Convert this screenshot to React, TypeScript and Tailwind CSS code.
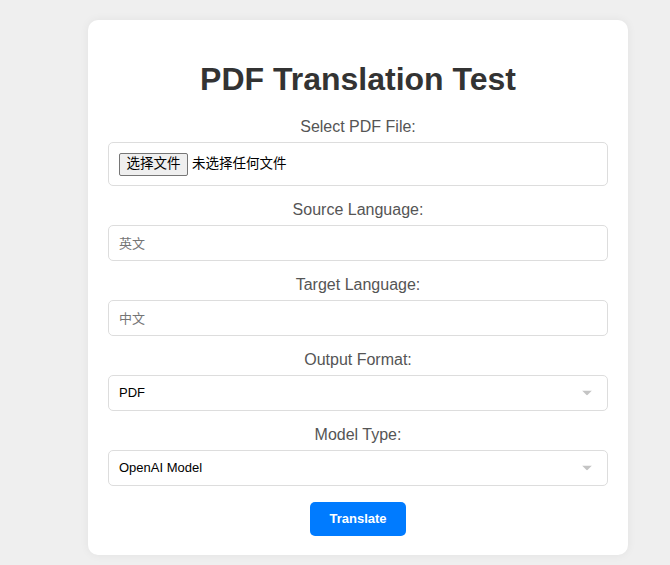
import React from "react";

const labelCls = "block text-center text-[16px] leading-[18px] text-[#555555] mb-[6px]";
const fieldCls =
  "w-full h-[36px] px-[10px] border border-[#dddddd] rounded-[5px] text-[13px] bg-white outline-none";

const Chevron = () => (
  <svg
    className="absolute right-[16px] top-1/2 -translate-y-1/2"
    width="10"
    height="5"
    viewBox="0 0 10 5"
  >
    <path d="M0 0 L10 0 L5 5 Z" fill="#c4c4c4" />
  </svg>
);

const SelectField = ({ value }: { value: string }) => (
  <div className="relative mb-[15px]">
    <div className={fieldCls + " flex items-center text-black"}>{value}</div>
    <Chevron />
  </div>
);

const App = () => {
  return (
    <div
      className="min-h-[565px] bg-[#efefef] pt-[20px] pl-[88px]"
      style={{ fontFamily: '"Liberation Sans", Arial, "Noto Sans CJK SC", sans-serif' }}
    >
      <div className="w-[540px] bg-white rounded-[10px] shadow-[0_0_10px_rgba(0,0,0,0.06)] px-[20px] pt-[20px] pb-[19px]">
        <h1 className="text-center text-[32px] leading-[37px] font-bold text-[#333333] mt-[21px] mb-[20px]">
          PDF Translation Test
        </h1>

        <label className={labelCls}>Select PDF File:</label>
        <div className="w-full h-[44px] px-[10px] border border-[#dddddd] rounded-[5px] mb-[15px] flex items-center gap-[4px] text-[13.5px] text-black">
          <span className="h-[23px] w-[69px] justify-center flex items-center border border-[#767676] rounded-[2px] bg-[#efefef]">
            选择文件
          </span>
          <span>未选择任何文件</span>
        </div>

        <label className={labelCls}>Source Language:</label>
        <input className={fieldCls + " mb-[15px] placeholder:text-[#757575]"} placeholder="英文" />

        <label className={labelCls}>Target Language:</label>
        <input className={fieldCls + " mb-[15px] placeholder:text-[#757575]"} placeholder="中文" />

        <label className={labelCls}>Output Format:</label>
        <SelectField value="PDF" />

        <label className={labelCls}>Model Type:</label>
        <SelectField value="OpenAI Model" />

        <div className="flex justify-center pt-[1px]">
          <button className="h-[34px] w-[96px] rounded-[5px] bg-[#007bff] text-white text-[13px] font-bold">
            Translate
          </button>
        </div>
      </div>
    </div>
  );
};

export default App;
